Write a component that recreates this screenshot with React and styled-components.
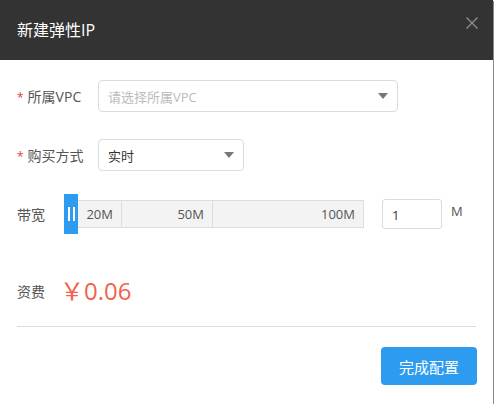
import React from "react";
import styled, { createGlobalStyle } from "styled-components";

const colors = {
  dark: "#333333",
  text: "#555555",
  border: "#dcdcdc",
  blue: "#2d9cf0",
  red: "#f4604c",
  star: "#e4393c",
};

const GlobalStyle = createGlobalStyle`
  html, body {
    margin: 0;
    padding: 0;
    background: #fff;
  }
  body {
    font-family: "Open Sans", "Noto Sans CJK SC", sans-serif;
  }
`;

const Modal = styled.div`
  width: 493px;
  height: 404px;
  background: #fff;
  box-shadow: 1px 1px 0 #8a8a8a;
  display: flex;
  flex-direction: column;
`;

const Header = styled.div`
  height: 60px;
  background: ${colors.dark};
  display: flex;
  align-items: center;
  justify-content: space-between;
  padding: 0 14px 0 17px;
  flex-shrink: 0;
`;

const Title = styled.h2`
  margin: 0;
  font-size: 16px;
  font-weight: normal;
  color: #fff;
  margin-top: -2px;
`;

const Close = styled.button`
  background: transparent;
  border: none;
  padding: 0;
  width: 14px;
  height: 14px;
  align-self: flex-start;
  margin-top: 16px;
  color: #8f8f8f;
  cursor: pointer;
`;

const Body = styled.div`
  padding: 20px 17px 0 17px;
  display: flex;
  flex-direction: column;
`;

const Row = styled.div`
  display: flex;
  align-items: center;
  margin-bottom: ${({ mb }) => mb || "0px"};
`;

const Label = styled.div`
  width: ${({ width }) => width || "81px"};
  flex-shrink: 0;
  font-size: 14px;
  color: ${colors.text};
  display: flex;
  align-items: center;
`;

const Star = styled.span`
  color: ${colors.star};
  font-size: 12px;
  margin-right: 4px;
  margin-top: 3px;
`;

const Select = styled.div`
  width: ${({ width }) => width};
  height: 32px;
  box-sizing: border-box;
  border: 1px solid ${colors.border};
  border-radius: 4px;
  display: flex;
  align-items: center;
  justify-content: space-between;
  padding: 0 9px 0 9px;
  font-size: 13px;
  color: ${({ placeholder }) => (placeholder ? "#bbbbbb" : "#333")};
`;

const Caret = styled.span`
  width: 0;
  height: 0;
  border-left: 5px solid transparent;
  border-right: 5px solid transparent;
  border-top: 6px solid #777;
`;

const Slider = styled.div`
  display: flex;
  align-items: center;
  height: 40px;
`;

const Thumb = styled.div`
  width: 14px;
  height: 40px;
  background: ${colors.blue};
  display: flex;
  align-items: center;
  justify-content: center;
  gap: 3px;

  span {
    width: 2px;
    height: 14px;
    background: #fff;
  }
`;

const Track = styled.div`
  display: flex;
  height: 28px;
  box-sizing: border-box;
  border: 1px solid ${colors.border};
  border-left: none;
  background: #f3f3f3;
`;

const Segment = styled.div`
  width: ${({ width }) => width};
  box-sizing: border-box;
  border-left: ${({ first }) => (first ? "none" : `1px solid ${colors.border}`)};
  display: flex;
  align-items: center;
  justify-content: flex-end;
  padding-right: 8px;
  font-size: 13px;
  color: ${colors.text};
`;

const Input = styled.input`
  width: 60px;
  height: 30px;
  box-sizing: border-box;
  border: 1px solid ${colors.border};
  border-radius: 3px;
  margin-left: 18px;
  padding: 2px 9px 0;
  font-family: inherit;
  font-size: 13px;
  color: #333;
  outline: none;
`;

const Unit = styled.span`
  font-size: 13px;
  color: ${colors.text};
  margin-left: 9px;
  align-self: flex-start;
  margin-top: 8px;
`;

const Price = styled.div`
  font-size: 24px;
  color: ${colors.red};
  line-height: 1;
`;

const Divider = styled.hr`
  border: none;
  border-top: 1px solid ${colors.border};
  margin: 0;
`;

const Footer = styled.div`
  display: flex;
  justify-content: flex-end;
  padding: 20px 16px 0 17px;
`;

const Submit = styled.button`
  width: 96px;
  height: 38px;
  border: none;
  border-radius: 4px;
  background: ${colors.blue};
  color: #fff;
  font-family: inherit;
  font-size: 15px;
  cursor: pointer;
`;

const CloseIcon = () => (
  <svg width="14" height="14" viewBox="0 0 14 14">
    <path d="M1.5 1.5 L12.5 12.5 M12.5 1.5 L1.5 12.5" stroke="currentColor" strokeWidth="1.3" />
  </svg>
);

export default function App() {
  return (
    <>
      <GlobalStyle />
      <Modal>
        <Header>
          <Title>新建弹性IP</Title>
          <Close aria-label="关闭">
            <CloseIcon />
          </Close>
        </Header>
        <Body>
          <Row mb="27px">
            <Label>
              <Star>*</Star>所属VPC
            </Label>
            <Select width="300px" placeholder>
              请选择所属VPC
              <Caret />
            </Select>
          </Row>
          <Row mb="23px">
            <Label>
              <Star>*</Star>购买方式
            </Label>
            <Select width="146px">
              实时
              <Caret />
            </Select>
          </Row>
          <Row mb="45px">
            <Label width="47px">带宽</Label>
            <Slider>
              <Thumb>
                <span />
                <span />
              </Thumb>
              <Track>
                <Segment first width="43px">20M</Segment>
                <Segment width="91px">50M</Segment>
                <Segment width="151px">100M</Segment>
              </Track>
            </Slider>
            <Input defaultValue="1" />
            <Unit>M</Unit>
          </Row>
          <Row mb="23px">
            <Label width="43px">资费</Label>
            <Price>￥0.06</Price>
          </Row>
          <Divider />
        </Body>
        <Footer>
          <Submit>完成配置</Submit>
        </Footer>
      </Modal>
    </>
  );
}
